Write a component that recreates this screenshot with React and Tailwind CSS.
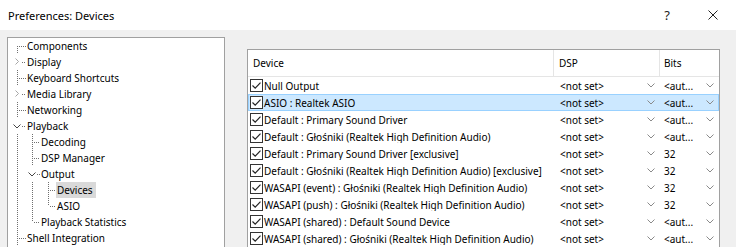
import React from "react";

const X = [9.5, 24.5, 40.5];
const T = [19, 33, 49];

const tree = [
  { label: "Components", level: 0, first: true, next: true, cont: [] },
  { label: "Display", level: 0, exp: "c", next: true, cont: [] },
  { label: "Keyboard Shortcuts", level: 0, next: true, cont: [] },
  { label: "Media Library", level: 0, exp: "c", next: true, cont: [] },
  { label: "Networking", level: 0, next: true, cont: [] },
  { label: "Playback", level: 0, exp: "o", next: true, cont: [] },
  { label: "Decoding", level: 1, next: true, cont: [true] },
  { label: "DSP Manager", level: 1, next: true, cont: [true] },
  { label: "Output", level: 1, exp: "o", next: true, cont: [true] },
  { label: "Devices", level: 2, next: true, cont: [true, true], selected: true },
  { label: "ASIO", level: 2, next: false, cont: [true, true] },
  { label: "Playback Statistics", level: 1, next: false, cont: [true] },
  { label: "Shell Integration", level: 0, next: true, cont: [] },
];

const DOT = "#6f6f6f";

function TreeGuides({ row }) {
  const w = T[row.level] - 1;
  const lines = [];
  row.cont.forEach((c, i) => {
    if (c) lines.push(<line key={"a" + i} x1={X[i]} y1={0} x2={X[i]} y2={16} />);
  });
  const x = X[row.level];
  if (!row.exp) {
    const y1 = row.first ? 8 : 0;
    const y2 = row.next ? 16 : 8;
    lines.push(<line key="own" x1={x} y1={y1} x2={x} y2={y2} />);
    lines.push(<line key="h" x1={x + 1} y1={8.5} x2={w} y2={8.5} />);
  } else {
    lines.push(<line key="h" x1={x + 4} y1={8.5} x2={w} y2={8.5} />);
  }
  return (
    <svg width={w} height={16} className="shrink-0" shapeRendering="crispEdges">
      <g stroke={DOT} strokeWidth={1} strokeDasharray="1 1">{lines}</g>
      {row.exp === "c" && (
        <polyline
          points={`${x - 2},${4.5} ${x + 1},${7.5} ${x - 2},${10.5}`}
          fill="none"
          stroke="#a6a6a6"
          strokeWidth={1}
          shapeRendering="auto"
        />
      )}
      {row.exp === "o" && (
        <polyline
          points={`${x - 4},${6.5} ${x - 0.5},${10} ${x + 3},${6.5}`}
          fill="none"
          stroke="#454545"
          strokeWidth={1}
          shapeRendering="auto"
        />
      )}
    </svg>
  );
}

const devices = [
  ["Null Output", "<aut..."],
  ["ASIO : Realtek ASIO", "<aut..."],
  ["Default : Primary Sound Driver", "<aut..."],
  ["Default : Głośniki (Realtek High Definition Audio)", "<aut..."],
  ["Default : Primary Sound Driver [exclusive]", "32"],
  ["Default : Głośniki (Realtek High Definition Audio) [exclusive]", "32"],
  ["WASAPI (event) : Głośniki (Realtek High Definition Audio)", "32"],
  ["WASAPI (push) : Głośniki (Realtek High Definition Audio)", "32"],
  ["WASAPI (shared) : Default Sound Device", "<aut..."],
  ["WASAPI (shared) : Głośniki (Realtek High Definition Audio)", "<aut..."],
];

function Check() {
  return (
    <svg width="13" height="13" className="shrink-0">
      <rect x="0.5" y="0.5" width="12" height="12" fill="#fff" stroke="#333" />
      <path d="M2.5 6.5 L5.2 9.2 L10.5 3.6" fill="none" stroke="#222" strokeWidth="1.2" />
    </svg>
  );
}

function Chevron() {
  return (
    <svg width="8" height="5" className="shrink-0">
      <polyline points="0.5,0.5 4,4 7.5,0.5" fill="none" stroke="#8a8a8a" strokeWidth="1" />
    </svg>
  );
}

export default function App() {
  return (
    <div className="w-[736px] h-[247px] overflow-hidden bg-[#f0f0f0] text-black font-['Noto_Sans',sans-serif] text-[10px] leading-none">
      <div className="h-[30px] bg-white flex items-center">
        <div className="pl-[8px] text-[11px] flex-1">Preferences: Devices</div>
        <div className="w-[46px] h-[30px] flex items-center justify-center text-[13px] text-[#222]">?</div>
        <div className="w-[46px] h-[30px] flex items-center justify-center">
          <svg width="10" height="10">
            <path d="M0.5 0.5 L9.5 9.5 M9.5 0.5 L0.5 9.5" stroke="#222" strokeWidth="1" />
          </svg>
        </div>
      </div>
      <div className="flex items-start">
        <div className="mt-[7px] ml-[7px] w-[218px] h-[230px] border border-[#a0a0a0] bg-white">
          {tree.map((r) => (
            <div key={r.label} className="h-[16px] flex items-center">
              <TreeGuides row={r} />
              <span
                className={
                  "h-[16px] flex items-center pl-[1px] pr-[3px] " +
                  (r.selected ? "bg-[#d9d9d9]" : "")
                }
              >
                {r.label}
              </span>
            </div>
          ))}
        </div>
        <div className="mt-[19px] ml-[22px] w-[473px] h-[220px] border border-[#a0a0a0] bg-white overflow-hidden">
          <div className="h-[27px] flex border-b border-[#e5e5e5]">
            <div className="w-[306px] pl-[5px] flex items-center border-r border-[#e5e5e5]">Device</div>
            <div className="w-[106px] pl-[5px] flex items-center border-r border-[#e5e5e5]">DSP</div>
            <div className="flex-1 pl-[4px] flex items-center">Bits</div>
          </div>
          {devices.map(([name, bits], i) => (
            <div
              key={name}
              className={
                "h-[17px] flex items-center border " +
                (i === 1 ? "bg-[#cce8ff] border-[#99d1ff]" : "border-transparent")
              }
            >
              <div className="w-[305px] flex items-center overflow-hidden whitespace-nowrap">
                <div className="ml-[1px] mr-[1px] flex"><Check /></div>
                <span>{name}</span>
              </div>
              <div className="w-[106px] flex items-center justify-between pl-[6px] pr-[5px]">
                <span>{"<not set>"}</span>
                <Chevron />
              </div>
              <div className="flex-1 flex items-center justify-between pl-[4px] pr-[4px]">
                <span>{bits}</span>
                <Chevron />
              </div>
            </div>
          ))}
        </div>
      </div>
    </div>
  );
}
